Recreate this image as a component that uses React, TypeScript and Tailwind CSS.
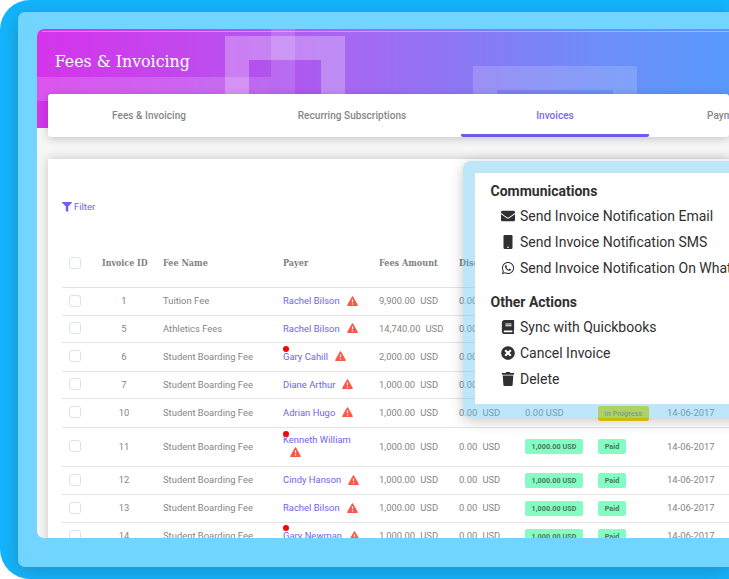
import type { ReactNode } from "react";
import {
  FaFilter,
  FaEnvelope,
  FaWhatsapp,
  FaBook,
  FaTimesCircle,
  FaTrash,
} from "react-icons/fa";

type Row = {
  id: number;
  fee: string;
  payer: string;
  amount: string;
  height: string;
  flagged?: boolean;
  paid?: boolean;
  progress?: boolean;
};

const rows: Row[] = [
  { id: 1, fee: "Tuition Fee", payer: "Rachel Bilson", amount: "9,900.00", height: "h-[28px]" },
  { id: 5, fee: "Athletics Fees", payer: "Rachel Bilson", amount: "14,740.00", height: "h-[27px]" },
  { id: 6, fee: "Student Boarding Fee", payer: "Gary Cahill", amount: "2,000.00", height: "h-[29px]", flagged: true },
  { id: 7, fee: "Student Boarding Fee", payer: "Diane Arthur", amount: "1,000.00", height: "h-[27px]" },
  { id: 10, fee: "Student Boarding Fee", payer: "Adrian Hugo", amount: "1,000.00", height: "h-[29px]", progress: true },
  { id: 11, fee: "Student Boarding Fee", payer: "Kenneth William", amount: "1,000.00", height: "h-[39px]", flagged: true, paid: true },
  { id: 12, fee: "Student Boarding Fee", payer: "Cindy Hanson", amount: "1,000.00", height: "h-[28px]", paid: true },
  { id: 13, fee: "Student Boarding Fee", payer: "Rachel Bilson", amount: "1,000.00", height: "h-[28px]", paid: true },
  { id: 14, fee: "Student Boarding Fee", payer: "Gary Newman", amount: "1,000.00", height: "h-[28px]", flagged: true, paid: true },
];

const columns =
  "grid grid-cols-[39px_62px_120px_96px_80px_66px_73px_69px_80px] items-center";

function Checkbox() {
  return <span className="ml-[7px] block size-3 rounded-[3px] border border-[#dce2ec] bg-white" />;
}

function Warning() {
  return (
    <svg viewBox="0 0 12 11" className="block h-[10px] w-[11px] shrink-0">
      <path d="M6 1 11.2 10.2H.8Z" fill="#fb5848" stroke="#fb5848" strokeWidth="1.4" strokeLinejoin="round" />
      <path d="M6 3.8V6.7M6 8V9.3" stroke="#fff" strokeWidth="1.3" />
    </svg>
  );
}

function TableRow({ row }: { row: Row }) {
  const wraps = row.payer === "Kenneth William";
  return (
    <div className={`${columns} ${row.height} shrink-0 border-b border-[#e2e3e5] pb-[2px] text-[#858585]`}>
      <Checkbox />
      <span className="pr-[16px] text-center">{row.id}</span>
      <span>{row.fee}</span>
      <span className={`relative flex text-[#6f62f0] ${wraps ? "flex-col items-start gap-[2px]" : "items-center gap-[7px]"}`}>
        {row.flagged && (
          <i className={`absolute left-0 size-[6px] rounded-full bg-[#ff0000] ${wraps ? "-top-[4px]" : "-top-[5px]"}`} />
        )}
        <span className={wraps ? "-mt-px" : ""}>{row.payer}</span>
        <span className={wraps ? "ml-[7px]" : ""}>
          <Warning />
        </span>
      </span>
      <span>
        {row.amount}
        <span className="ml-[5px]">USD</span>
      </span>
      <span>
        0.00{(row.paid || row.progress) && <span className="ml-[5px]">USD</span>}
      </span>
      {row.paid ? (
        <span className="mt-px flex h-[15px] w-[58px] items-center justify-center rounded-[2px] bg-[#85fdc2] text-[7.2px] font-bold tracking-[0.05px] text-[#48765f]">
          1,000.00 USD
        </span>
      ) : row.progress ? (
        <span className="tracking-[0.05px]">0.00 USD</span>
      ) : (
        <span />
      )}
      {row.paid ? (
        <span className="mt-px flex h-[15px] w-7 items-center justify-center rounded-[2px] bg-[#85fdc2] text-[7.2px] font-bold tracking-[0.05px] text-[#48765f]">
          Paid
        </span>
      ) : row.progress ? (
        <span className="mt-[2px] flex h-[15px] w-[51px] items-center justify-center rounded-[2px] bg-[#e8da08] text-[7.2px] font-medium tracking-[0.1px] text-[#8a8648]">
          In Progress
        </span>
      ) : (
        <span />
      )}
      <span>14-06-2017</span>
    </div>
  );
}

function Tab({ label, active }: { label: string; active?: boolean }) {
  return (
    <div
      className={`flex h-full w-[188px] shrink-0 items-center justify-center border-y-[3px] border-t-transparent ${
        active ? "rounded-b-[2px] border-b-[#6d5ce8] text-[#7568f2]" : "border-b-transparent text-[#868686]"
      }`}
    >
      {label}
    </div>
  );
}

function MenuItem({ icon, children }: { icon: ReactNode; children: ReactNode }) {
  return (
    <div className="flex h-[26px] items-center whitespace-nowrap">
      <span className="mr-[5px] flex w-[14.5px] shrink-0 justify-center">{icon}</span>
      {children}
    </div>
  );
}

function Phone() {
  return (
    <svg viewBox="0 0 14 14" className="size-[14px]">
      <rect x="2.5" width="9" height="14" rx="1.3" fill="currentColor" />
      <circle cx="7" cy="12.2" r=".8" fill="#fff" />
    </svg>
  );
}

export default function App() {
  return (
    <div className="h-[579px] w-[729px] overflow-hidden bg-white font-['Roboto',sans-serif]">
      <div className="h-full overflow-hidden rounded-l-[30px] bg-[#12b6ff] pt-3 pb-3 pl-[18px]">
        <div className="h-full rounded-l-[7px] bg-[#72d5ff] pt-[17px] pb-[29px] pl-[19px] shadow-[0_4px_20px_rgba(50,80,100,0.4)]">
          <div className="relative h-full overflow-hidden rounded-l-[7px] bg-[#f6f6f6]">
            <div className="relative h-[99px] bg-[linear-gradient(90deg,#d534eb_0%,#c446ed_20%,#a866f1_44%,#8e76f4_60%,#6f8cf7_80%,#5799fb_100%)]">
              <svg viewBox="0 0 692 99" className="absolute inset-0 h-[99px] w-[692px]" shapeRendering="crispEdges">
                <path d="M5 2h687v1H5Z" fill="#fff" fillOpacity=".35" />
                <path d="M0 48h234v24H0Z" fill="#fff" fillOpacity=".16" />
                <path d="M234 0h24v99h-24Z" fill="#fff" fillOpacity=".14" />
                <path d="M188 7h120v92h-24V31h-72v68h-24Z" fill="#fff" fillOpacity=".26" />
                <path d="M212 31h72v68h-72Z" fill="#a02df0" fillOpacity=".1" />
                <path d="M436 37h164v62h-24V61H460v38h-24Z" fill="#fff" fillOpacity=".16" />
              </svg>
              <h1 className="relative w-max origin-left scale-x-[0.93] pt-[20px] pl-[19px] font-['Roboto_Slab','DejaVu_Serif',serif] text-[17px] leading-[24px] text-white">
                Fees &amp; Invoicing
              </h1>
            </div>

            <nav className="relative -mt-[34px] ml-[11px] flex h-[43px] gap-[15px] rounded-[3px] bg-white pl-[7px] text-[10px] font-medium tracking-[0.05px] shadow-[0_2px_9px_rgba(0,0,0,0.2)]">
              <Tab label="Fees & Invoicing" />
              <Tab label="Recurring Subscriptions" />
              <Tab label="Invoices" active />
              <div className="flex shrink-0 items-center pl-[43px] text-[#868686]">Payments</div>
            </nav>

            <main className="mt-[22px] ml-[11px] flex h-[400px] flex-col bg-white pl-[14px] shadow-[0_0_10px_rgba(0,0,0,0.2)]">
              <div className="mt-[41px] flex h-[14px] items-center gap-[2px] text-[9.5px] text-[#6f62f0]">
                <FaFilter className="size-[10px]" />
                <span className="pt-px">Filter</span>
              </div>
              <div className={`${columns} mt-[24px] h-[50px] shrink-0 border-b border-[#e2e3e5] font-['Roboto_Slab','DejaVu_Serif',serif] text-[9px] font-bold whitespace-nowrap text-[#808080]`}>
                <Checkbox />
                <span className="ml-px origin-left scale-x-[0.88] pt-[2px]">Invoice ID</span>
                <span className="origin-left scale-x-[0.9] pt-[2px]">Fee Name</span>
                <span className="origin-left scale-x-[0.9] pt-[2px]">Payer</span>
                <span className="origin-left scale-x-[0.9] pt-[2px]">Fees Amount</span>
                <span className="origin-left scale-x-[0.9] pt-[2px]">Discount</span>
              </div>
              <div className="flex flex-col text-[9.4px] leading-[11px] tracking-[0.03px] whitespace-nowrap">
                {rows.map((row) => (
                  <TableRow key={row.id} row={row} />
                ))}
              </div>
            </main>

            <aside className="absolute top-[132px] left-[426px] h-[257px] w-[290px] rounded-[8px] shadow-[0_3px_14px_rgba(0,0,0,0.22)]">
              <div className="h-full rounded-[8px] bg-[rgba(90,193,240,0.4)] p-3 pb-[14px]">
                <div className="h-full bg-white pt-[5px] pl-[15.5px] text-[14px] text-[#303030]">
                  <h2 className="h-[25px] leading-[26px] font-bold">Communications</h2>
                  <div className="pl-[10px]">
                    <MenuItem icon={<FaEnvelope className="size-[14px]" />}>Send Invoice Notification Email</MenuItem>
                    <MenuItem icon={<Phone />}>Send Invoice Notification SMS</MenuItem>
                    <MenuItem icon={<FaWhatsapp className="size-[14px]" />}>Send Invoice Notification On WhatsApp</MenuItem>
                  </div>
                  <h2 className="mt-[8px] h-[25px] leading-[26px] font-bold">Other Actions</h2>
                  <div className="pl-[10px]">
                    <MenuItem icon={<FaBook className="size-[14px]" />}>Sync with Quickbooks</MenuItem>
                    <MenuItem icon={<FaTimesCircle className="size-[14px]" />}>Cancel Invoice</MenuItem>
                    <MenuItem icon={<FaTrash className="size-[14px]" />}>Delete</MenuItem>
                  </div>
                </div>
              </div>
            </aside>
          </div>
        </div>
      </div>
    </div>
  );
}
